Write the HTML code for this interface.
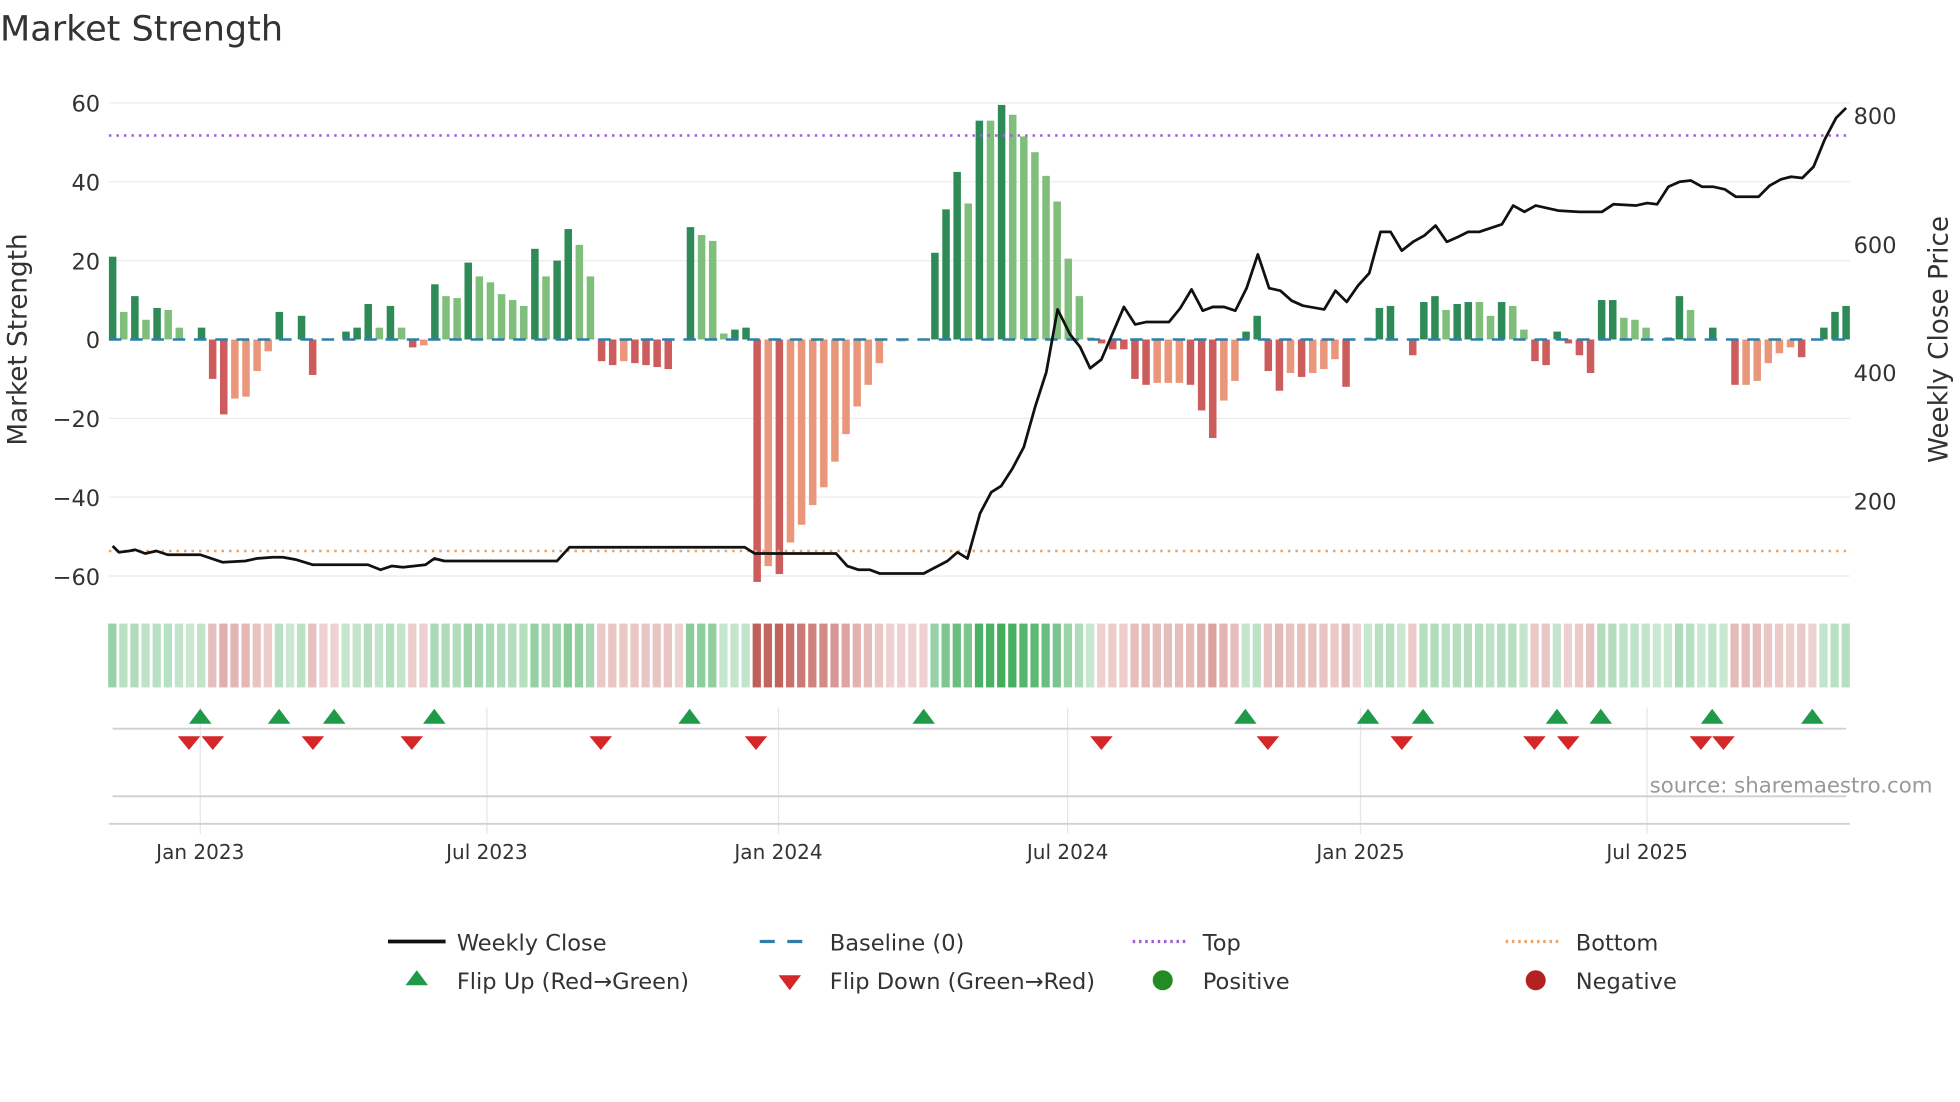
<!DOCTYPE html>
<html><head><meta charset="utf-8"><style>
html,body{margin:0;padding:0;background:#fff;width:1960px;height:1102px;overflow:hidden}
svg{display:block;font-family:"DejaVu Sans","Liberation Sans",sans-serif}
</style></head><body>
<svg id="s" width="1960" height="1102" viewBox="0 0 1566 880" xmlns="http://www.w3.org/2000/svg">
<text x="0" y="32" font-size="28" fill="#333">Market Strength</text>
<g id="grid" stroke="#ebebeb" stroke-width="1"></g>
<g id="bars"></g>
<line x1="87" y1="108" x2="1478" y2="108" stroke="#9b5fd6" stroke-width="2" stroke-dasharray="2,4"/>
<line x1="87" y1="440" x2="1478" y2="440" stroke="#e8a56a" stroke-width="2" stroke-dasharray="2,4"/>
<line x1="87" y1="271" x2="1478" y2="271" stroke="#2f7ea8" stroke-width="2" stroke-dasharray="10,7"/>
<polyline id="price" fill="none" stroke="#111" stroke-width="2.2" stroke-linejoin="round"/>
<g font-size="18" fill="#333" text-anchor="end">
<text x="80" y="89">60</text><text x="80" y="152">40</text><text x="80" y="215">20</text><text x="80" y="278">0</text><text x="80" y="341">−20</text><text x="80" y="404">−40</text><text x="80" y="467">−60</text>
</g>
<g font-size="18" fill="#333">
<text x="1481" y="99">800</text><text x="1481" y="202">600</text><text x="1481" y="304">400</text><text x="1481" y="407">200</text>
</g>
<text transform="translate(21,271) rotate(-90)" text-anchor="middle" font-size="21" fill="#333">Market Strength</text>
<text transform="translate(1556,271) rotate(-90)" text-anchor="middle" font-size="21" fill="#333">Weekly Close Price</text>
<g id="heat"></g>
<g id="vgrid" stroke="#e6e6e6" stroke-width="1"></g>
<line x1="90" y1="582" x2="1475" y2="582" stroke="#d0d0d0" stroke-width="1.5"/>
<line x1="90" y1="636" x2="1475" y2="636" stroke="#d0d0d0" stroke-width="1.5"/>
<line x1="87" y1="658" x2="1478" y2="658" stroke="#d0d0d0" stroke-width="1.5"/>
<g id="marks"></g>
<text x="1544" y="633" font-size="17" fill="#999" text-anchor="end">source: sharemaestro.com</text>
<g font-size="16" fill="#333" text-anchor="middle">
<text x="160" y="686">Jan 2023</text><text x="389" y="686">Jul 2023</text><text x="622" y="686">Jan 2024</text><text x="853" y="686">Jul 2024</text><text x="1087" y="686">Jan 2025</text><text x="1316" y="686">Jul 2025</text>
</g>
<g font-size="18" fill="#333">
<line x1="310" y1="752" x2="356" y2="752" stroke="#111" stroke-width="3"/>
<text x="365" y="759">Weekly Close</text>
<line x1="607" y1="752" x2="650" y2="752" stroke="#2f7ea8" stroke-width="2.5" stroke-dasharray="12,10"/>
<text x="663" y="759">Baseline (0)</text>
<line x1="905" y1="752" x2="948" y2="752" stroke="#9b5fd6" stroke-width="2.5" stroke-dasharray="2,3"/>
<text x="961" y="759">Top</text>
<line x1="1203" y1="752" x2="1246" y2="752" stroke="#e8a56a" stroke-width="2.5" stroke-dasharray="2,3"/>
<text x="1259" y="759">Bottom</text>
<polygon points="333,775 324,787 342,787" fill="#1f9a48"/>
<text x="365" y="790">Flip Up (Red→Green)</text>
<polygon points="622,779 640,779 631,791" fill="#d62728"/>
<text x="663" y="790">Flip Down (Green→Red)</text>
<circle cx="929" cy="783" r="8" fill="#228b22"/>
<text x="961" y="790">Positive</text>
<circle cx="1227" cy="783" r="8" fill="#b22222"/>
<text x="1259" y="790">Negative</text>
</g>
</svg>
<script>
var NS="http://www.w3.org/2000/svg";
function el(p,t,a){var e=document.createElementNS(NS,t);for(var k in a)e.setAttribute(k,a[k]);document.getElementById(p).appendChild(e);return e;}
[82,145,208,334,397,460].forEach(function(y){el("grid","line",{x1:87,x2:1478,y1:y,y2:y});});
var V=[[21,1],[7,0],[11,1],[5,0],[8,1],[7.5,0],[3,0],[0,1],[3,1],[-10,1],[-19,1],[-15,0],[-14.5,0],[-8,0],[-3,0],[7,1],[0,1],[6,1],[-9,1],[0,1],[0,1],[2,1],[3,1],[9,1],[3,0],[8.5,1],[3,0],[-2,1],[-1.5,0],[14,1],[11,0],[10.5,0],[19.5,1],[16,0],[14.5,0],[11.5,0],[10,0],[8.5,0],[23,1],[16,0],[20,1],[28,1],[24,0],[16,0],[-5.5,1],[-6.5,1],[-5.5,0],[-6,1],[-6.5,1],[-7,1],[-7.5,1],[0,1],[28.5,1],[26.5,0],[25,0],[1.5,0],[2.5,1],[3,1],[-61.5,1],[-57.5,0],[-59.5,1],[-51.5,0],[-47,0],[-42,0],[-37.5,0],[-31,0],[-24,0],[-17,0],[-11.5,0],[-6,0],[0,1],[-0.5,0],[0,1],[0,1],[22,1],[33,1],[42.5,1],[34.5,0],[55.5,1],[55.5,0],[59.5,1],[57,0],[51.5,0],[47.5,0],[41.5,0],[35,0],[20.5,0],[11,0],[0.5,0],[-1,1],[-2.5,1],[-2.5,1],[-10,1],[-11.5,1],[-11,0],[-11,0],[-11,0],[-11.5,1],[-18,1],[-25,1],[-15.5,0],[-10.5,0],[2,1],[6,1],[-8,1],[-13,1],[-8.5,0],[-9.5,1],[-8.5,0],[-7.5,0],[-5,0],[-12,1],[0,1],[0.5,0],[8,1],[8.5,1],[0,1],[-4,1],[9.5,1],[11,1],[7.5,0],[9,1],[9.5,1],[9.5,0],[6,0],[9.5,1],[8.5,0],[2.5,0],[-5.5,1],[-6.5,1],[2,1],[-1,1],[-4,1],[-8.5,1],[10,1],[10,1],[5.5,0],[5,0],[3,0],[0,1],[0.5,1],[11,1],[7.5,0],[0,1],[3,1],[0,1],[-11.5,1],[-11.5,0],[-10.5,0],[-6,0],[-3.5,0],[-2,0],[-4.5,1],[0,1],[3,1],[7,1],[8.5,1]];
var n=V.length,step=(1475-90)/(n-1),last=1;
function mix(c,t){return "rgb("+c.map(function(v){return Math.round(255+(v-255)*t);}).join(",")+")";}
V.forEach(function(d,i){
 var x=90+i*step,v=d[0],y0=271,h=Math.abs(v)*3.15;
 if(v!==0){var col=v>0?(d[1]?"#2e8b57":"#7fbf7b"):(d[1]?"#cd5c5c":"#e9967a");
  el("bars","rect",{x:x-3,width:6,y:v>0?y0-h:y0,height:h,fill:col});last=v>0?1:-1;}
 var s=v===0?last:(v>0?1:-1),t=0.25+0.65*Math.min(Math.abs(v),62)/62;
 el("heat","rect",{x:x-3.6,width:6.6,y:498,height:51,fill:s>0?mix([40,160,70],t):mix([185,75,70],t)});
});
[160,389,622,853,1087,1316].forEach(function(x){el("vgrid","line",{x1:x,x2:x,y1:565,y2:666});});
[160,223,267,347,551,738,995,1093,1137,1244,1279,1368,1448].forEach(function(x){el("marks","polygon",{points:(x)+",566 "+(x-9)+",578 "+(x+9)+",578",fill:"#1f9a48"});});
[151,170,250,329,480,604,880,1013,1120,1226,1253,1359,1377].forEach(function(x){el("marks","polygon",{points:(x-9)+",588 "+(x+9)+",588 "+x+",599",fill:"#d62728"});});
var P=[[90,436],[95,441],[103,440],[108,439],[116,442],[125,440],[134,443],[143,443],[160,443],[178,449],[196,448],[205,446],[218,445],[226,445],[237,447],[250,451],[270,451],[294,451],[304,455],[313,452],[322,453],[340,451],[347,446],[355,448],[375,448],[445,448],[455,437],[595,437],[603,442],[668,442],[677,452],[686,455],[695,455],[703,458],[738,458],[757,448],[765,441],[773,446],[783,410],[792,393],[800,388],[809,374],[818,357],[827,325],[836,297],[845,247],[855,267],[863,277],[871,294],[880,287],[889,266],[898,245],[907,259],[916,257],[934,257],[943,246],[952,231],[961,248],[969,245],[978,245],[987,248],[996,230],[1005,203],[1014,230],[1023,232],[1032,240],[1041,244],[1058,247],[1067,232],[1076,241],[1085,228],[1094,218],[1103,185],[1111,185],[1120,200],[1129,193],[1138,188],[1147,180],[1156,193],[1165,189],[1173,185],[1182,185],[1191,182],[1200,179],[1209,164],[1218,169],[1227,164],[1245,168],[1262,169],[1280,169],[1289,163],[1307,164],[1316,162],[1324,163],[1333,149],[1342,145],[1351,144],[1360,149],[1369,149],[1378,151],[1387,157],[1405,157],[1414,148],[1423,143],[1431,141],[1440,142],[1449,133],[1458,111],[1467,94],[1475,86]];
document.getElementById("price").setAttribute("points",P.map(function(p){return p.join(",");}).join(" "));
</script>
</body></html>
